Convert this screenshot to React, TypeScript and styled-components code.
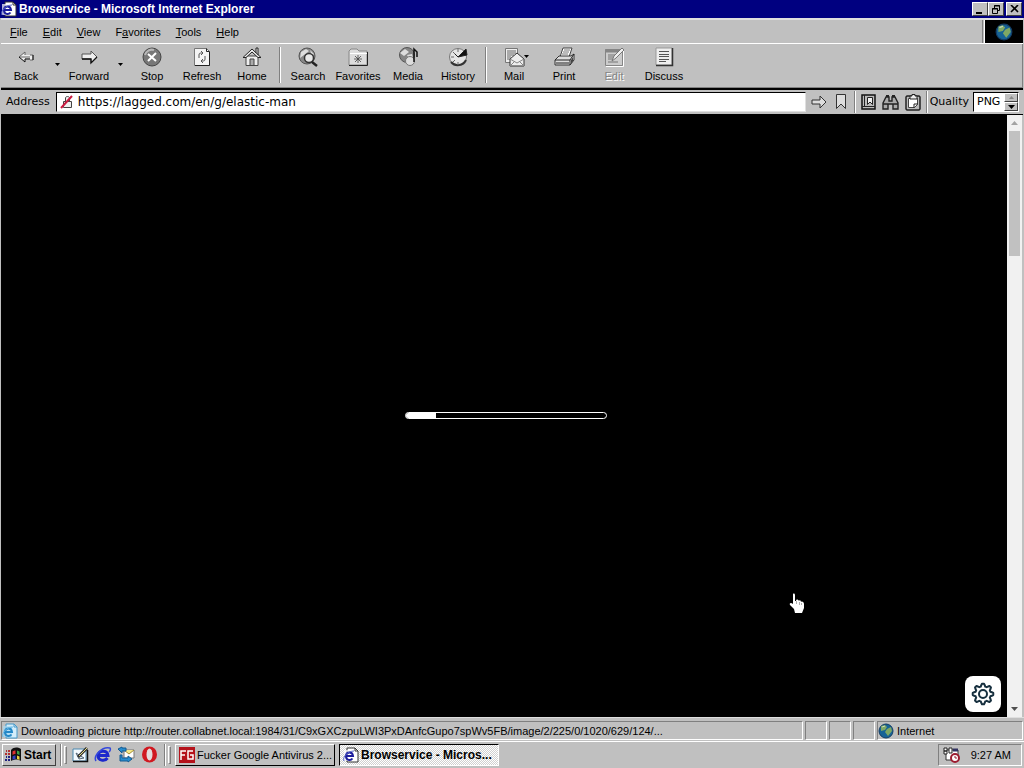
import React from "react";
import styled, { createGlobalStyle, css } from "styled-components";

const Global = createGlobalStyle`
  * { box-sizing: border-box; }
  body { margin: 0; background: #c0c0c0; }
  button, input, select { font: inherit; color: inherit; margin: 0; padding: 0; border: 0; background: none; border-radius: 0; }
  svg { display: block; flex: none; }
`;

const raised = css`
  border: 1px solid;
  border-color: #fff #404040 #404040 #fff;
`;
const sunken = css`
  border: 1px solid;
  border-color: #808080 #fff #fff #808080;
`;

const Desktop = styled.div`
  display: flex;
  flex-direction: column;
  min-height: 100vh;
  background: #c0c0c0;
  color: #000;
  font: 11px/14px "Liberation Sans", Arial, sans-serif;
`;
const TitleBar = styled.header`
  display: flex;
  align-items: center;
  height: 18px;
  padding: 0 2px 0 1px;
  gap: 2px;
  background: #000080;
  color: #fff;
`;
const Title = styled.h1`
  flex: 1;
  margin: 0;
  font-size: 12px;
  line-height: 16px;
  font-weight: bold;
`;
const WindowButtons = styled.div`
  display: flex;
`;
const WindowButton = styled.button<{ $gap?: boolean }>`
  ${raised}
  width: 16px;
  height: 14px;
  margin-left: ${(p) => (p.$gap ? 2 : 0)}px;
  background: #c0c0c0;
  display: grid;
  place-items: center;
`;
const MenuRow = styled.div`
  display: flex;
  align-items: stretch;
  height: 26px;
  margin: 0 1px;
  border-top: 2px solid #dfdfdf;
  border-bottom: 1px solid #fff;
`;
const Menu = styled.nav`
  display: flex;
  align-items: center;
  flex: 1;
  padding: 0 2px;
  border-right: 1px solid #808080;
`;
const MenuItem = styled.button`
  padding: 0 7px;
  margin-right: 1px;
`;
const Throbber = styled.div`
  width: 39px;
  margin-left: 1px;
  background: #000;
  border-left: 1px solid #fff;
  display: grid;
  place-items: center;
`;
const Toolbar = styled.div`
  display: flex;
  align-items: center;
  height: 44px;
  margin: 0 1px;
  padding-bottom: 2px;
  border-right: 1px solid #808080;
  border-bottom: 1px solid #808080;
`;
const ToolButton = styled.button<{ $off?: boolean }>`
  position: relative;
  display: flex;
  flex-direction: column;
  align-items: center;
  width: 50px;
  gap: 1px;
  color: ${(p) => (p.$off ? "#858585" : "#000")};
  text-shadow: ${(p) => (p.$off ? "1px 1px #fff" : "none")};
`;
const DropButton = styled.button`
  width: 13px;
  height: 40px;
  display: grid;
  place-items: center;
`;
const CornerArrow = styled.span`
  position: absolute;
  top: 8px;
  right: 10px;
`;
const Divider = styled.span<{ $tall?: boolean }>`
  flex: none;
  width: 2px;
  height: ${(p) => (p.$tall ? 36 : 22)}px;
  margin: 0 2px;
  border-left: 1px solid #808080;
  border-right: 1px solid #fff;
`;
const AddressRow = styled.form`
  display: flex;
  align-items: center;
  height: 27px;
  margin: 0 1px;
  padding: 0 4px 0 5px;
  border-top: 2px solid #000;
  border-bottom: 1px solid #000;
  font-family: "DejaVu Sans", Verdana, sans-serif;
`;
const AddressBox = styled.div`
  display: flex;
  align-items: center;
  flex: 1;
  height: 20px;
  margin: 0 2px 0 6px;
  padding-left: 3px;
  gap: 4px;
  background: #fff;
  border: 1px solid;
  border-color: #000 #dfdfdf #dfdfdf #000;
`;
const AddressInput = styled.input`
  flex: 1;
  outline: none;
  font-size: 12px;
`;
const SmallButton = styled.button`
  width: 22px;
  height: 20px;
  display: grid;
  place-items: center;
`;
const Quality = styled.div`
  display: flex;
  height: 20px;
  margin-left: 4px;
  background: #fff;
  border: 1px solid;
  border-color: #000 #fff #fff #000;
`;
const QualitySelect = styled.select`
  appearance: none;
  width: 30px;
  padding-left: 3px;
  outline: none;
`;
const Spinner = styled.div`
  display: flex;
  flex-direction: column;
`;
const SpinButton = styled.button`
  ${raised}
  flex: 1;
  width: 14px;
  background: #c0c0c0;
  display: grid;
  place-items: center;
`;
const Viewport = styled.main`
  position: relative;
  display: flex;
  flex: 1;
  margin: 0 2px 0 1px;
  background: #000;
`;
const Game = styled.div`
  flex: 1;
  display: grid;
  place-items: center;
  padding: 0 0 2px 4px;
`;
const Progress = styled.div`
  width: 202px;
  height: 7px;
  overflow: hidden;
  border: 1px solid #fff;
  border-radius: 4px;
`;
const ProgressFill = styled.div`
  height: 100%;
  background: #fff;
`;
const GearButton = styled.button`
  position: absolute;
  right: 21px;
  bottom: 5px;
  width: 36px;
  height: 36px;
  border-radius: 8px;
  background: #fff;
  display: grid;
  place-items: center;
`;
const Pointer = styled.span`
  position: absolute;
  left: 788px;
  top: 478px;
`;
const ScrollBar = styled.div`
  display: flex;
  flex-direction: column;
  align-items: center;
  width: 15px;
  background: #f1f1f1;
`;
const ScrollArrow = styled.button`
  width: 15px;
  height: 16px;
  display: grid;
  place-items: center;
`;
const ScrollTrack = styled.div`
  flex: 1;
  width: 11px;
`;
const ScrollThumb = styled.div`
  height: 22%;
  background: #c1c1c1;
`;
const StatusBar = styled.footer`
  display: flex;
  height: 24px;
  padding: 3px 1px 1px;
  gap: 2px;
  border-top: 1px solid #dfdfdf;
`;
const StatusCell = styled.div<{ $width?: number }>`
  ${sunken}
  display: flex;
  align-items: center;
  gap: 3px;
  white-space: nowrap;
  overflow: hidden;
  ${(p) => (p.$width ? `width: ${p.$width}px;` : "flex: 1;")}
`;
const TaskBar = styled.nav`
  display: flex;
  align-items: center;
  height: 27px;
  padding: 0 2px 1px;
  border-top: 1px solid #fff;
`;
const StartButton = styled.button`
  ${raised}
  display: flex;
  align-items: center;
  width: 54px;
  height: 22px;
  padding-left: 2px;
  gap: 2px;
  font-size: 12px;
  font-weight: bold;
`;
const Grip = styled.span`
  flex: none;
  width: 3px;
  height: 18px;
  border: 1px solid;
  border-color: #fff #808080 #808080 #fff;
`;
const Rule = styled(Divider)`
  margin: 0 2px 0 4px;
`;
const QuickLaunch = styled.div`
  display: flex;
  gap: 1px;
  margin-left: 2px;
`;
const TaskButton = styled.button<{ $active?: boolean }>`
  display: flex;
  align-items: center;
  width: 160px;
  height: 22px;
  margin-left: 4px;
  padding: 0 3px;
  gap: 2px;
  white-space: nowrap;
  overflow: hidden;
  border: 1px solid;
  border-color: ${(p) => (p.$active ? "#000 #fff #fff #000" : "#fff #000 #000 #fff")};
  background: ${(p) =>
    p.$active ? "repeating-conic-gradient(#fff 0 25%, #d0d0d0 0 50%) 0 0 / 2px 2px" : "#c0c0c0"};
  font-weight: ${(p) => (p.$active ? "bold" : "normal")};
  font-size: ${(p) => (p.$active ? 12 : 11)}px;
`;
const Tray = styled.div`
  ${sunken}
  display: flex;
  align-items: center;
  justify-content: space-between;
  width: 84px;
  height: 22px;
  margin-left: auto;
  padding: 0 10px 0 4px;
`;

const Triangle = ({ up, color = "#000", w = 5 }: { up?: boolean; color?: string; w?: number }) => (
  <svg width={w} height={w > 5 ? 4 : 3} viewBox="0 0 5 3" preserveAspectRatio="none">
    <path d={up ? "M0 3h5L2.5 0z" : "M0 0h5L2.5 3z"} fill={color} />
  </svg>
);

const PageIcon = ({ blue }: { blue?: boolean }) => {
  const line = blue ? "#4798c8" : "#333";
  const letter = blue ? "#2488c8" : "#1c1c9c";
  return (
    <svg width="16" height="16" viewBox="0 0 16 16">
      <path d="M4 1h8l3 3v11H4z" fill={blue ? "#d4edfa" : "#fff"} stroke={line} />
      <path d="M12 1v3h3" fill="none" stroke={line} />
      <path d="M1 3h9v11H1z" fill={blue ? "#a5d8f4" : "#fff"} opacity=".7" />
      <path d="M9.500 11.500c-2 2.500-6.500 2-6.500-2.500s6.500-5 7 0H4" fill="none" stroke={letter} strokeWidth="2" />
      <path d="M1 14C-1 10 5 4 11 4" fill="none" stroke={blue ? "#65b7e4" : "#5565c8"} />
    </svg>
  );
};

const Globe = ({ size = 16 }: { size?: number }) => (
  <svg width={size} height={size} viewBox="0 0 16 16">
    <circle cx="8" cy="8" r="7" fill="#176396" stroke="#123b63" />
    <path d="M3 3l4-1 2 2-2 3-4 1zM9 6l4-2 1 4-4 5-3-4z" fill="#7fa864" />
    <path d="M4 4l3-1" stroke="#fff" opacity=".6" />
  </svg>
);

const toolArt: Record<string, React.ReactNode> = {
  Back: (
    <>
      <path d="M3 10l6-5v3h8v5h-3v-2H9v4z" fill="#eee" />
      <path d="M9 5l-6 5h11M9 5v3M14 8h3v5h-3" fill="none" stroke="#666" />
      <path d="M3 10l6 5v-3h5M17 8v5" fill="none" stroke="#111" />
    </>
  ),
  Forward: (
    <>
      <path d="M3 7h9V4l6 6-6 6v-4H3z" fill="#eee" stroke="#555" />
      <path d="M3 12h9v4l6-6" fill="none" stroke="#111" strokeWidth="1.300" />
    </>
  ),
  Stop: (
    <>
      <circle cx="10" cy="10" r="9" fill="#777" stroke="#444" />
      <path d="M3 8a7 7 0 0 1 9-5" stroke="#b8b8b8" strokeWidth="2" fill="none" />
      <path d="M6 7l8 7M14 6l-8 8" stroke="#fff" strokeWidth="2" />
    </>
  ),
  Refresh: (
    <>
      <path d="M2.500 1.500h12l3 3v14h-15z" fill="#f4f4f4" stroke="#777" />
      <path d="M14.500 1.500v3h3M17.500 5v13.500H3" fill="none" stroke="#222" />
      <path d="M7 11V8c0-2 1-2 3-2M9 4l2 2-2 2M13 9v3c0 2-1 2-3 2M11 12l-2 2 2 2" fill="none" stroke="#555" />
    </>
  ),
  Home: (
    <>
      <path d="M4 9h12v9.500H4z" fill="#eee" stroke="#444" />
      <path d="M14 6V1h2v7M1 10.500L10 2l9 8.500h-3L10 5l-6 5.500z" fill="#eee" stroke="#222" />
      <path d="M8 18v-6h4v6" fill="#aaa" stroke="#444" />
    </>
  ),
  Search: (
    <>
      <circle cx="9" cy="9" r="8" fill="#888" stroke="#555" />
      <path d="M3 5l5-3 3 2-5 4-4 3zM12 3l4 4-2 2z" fill="#ddd" />
      <circle cx="11" cy="11" r="4.500" fill="#e8e8e8" stroke="#333" strokeWidth="1.500" />
      <path d="M14 15l5 4" stroke="#222" strokeWidth="2.500" />
    </>
  ),
  Favorites: (
    <>
      <path d="M1 18V4l2-2h6l2 2h8v14z" fill="#ddd" stroke="#888" />
      <path d="M1 18.500h18.500V5" fill="none" stroke="#222" />
      <path d="M2 6.500h17" stroke="#fff" />
      <path d="M10 8v8M6 12h8M7 9l6 6M13 9l-6 6" stroke="#444" strokeWidth=".8" />
    </>
  ),
  Media: (
    <>
      <circle cx="9" cy="8" r="7.500" fill="#858585" stroke="#555" />
      <path d="M2 6l5-4 4 3-5 4zM9 8l5-1 1 4-4 1z" fill="#ddd" />
      <circle cx="12" cy="14" r="4.500" fill="#ddd" stroke="#777" />
      <path d="M16 15V2l3 3v5" fill="none" stroke="#111" strokeWidth="1.500" />
    </>
  ),
  History: (
    <>
      <circle cx="10" cy="10" r="8.500" fill="#e4e4e4" stroke="#777" />
      <path d="M3 15a9 9 0 0 0 15-2" fill="none" stroke="#333" strokeWidth="2" />
      <path d="M10 2v3M3 10h3M10 15v3M5 5l2 2M5 15l2-2" stroke="#666" />
      <path d="M10 10l8-8 1 6zM10 10L7 7" fill="#111" stroke="#222" />
    </>
  ),
  Mail: (
    <>
      <path d="M1.500 1.500h12v14h-12z" fill="#eee" stroke="#777" />
      <path d="M3 4h9M3 6h9M3 8h7M3 10h4M3 12h3" stroke="#666" />
      <path d="M6 12l7-6 7 6v7H6z" fill="#eee" stroke="#333" />
      <path d="M6 12l7 4 7-4M6 19l5-5M20 19l-5-5" fill="none" stroke="#888" />
    </>
  ),
  Print: (
    <>
      <path d="M6 10L9 1h9l-3 9z" fill="#fff" stroke="#444" />
      <path d="M10 3h6M9 5h6M8 7h6" stroke="#777" />
      <path d="M1 13l4-4h12l3-2v6l-4 5H1z" fill="#ddd" stroke="#333" />
      <path d="M1 13h15l4-6M16 13v5M2 16h13" fill="none" stroke="#222" />
      <path d="M17 13l2-3v4l-2 3z" fill="#444" />
    </>
  ),
  Edit: (
    <>
      <path d="M1.500 2.500h17v16h-17z" fill="#ccc" stroke="#858585" />
      <path d="M1 4h17" stroke="#858585" strokeWidth="3" />
      <path d="M4 8h8M4 10h7M4 12h5M4 15h10" stroke="#777" />
      <path d="M8 14l2-5 8-8 2 2-8 8z" fill="#eee" stroke="#777" />
      <path d="M2 19.500h17.500V4" fill="none" stroke="#fff" />
    </>
  ),
  Discuss: (
    <>
      <path d="M2 1h16v17H2z" fill="#eee" stroke="#999" />
      <path d="M2 18.500h16.500V1" fill="none" stroke="#333" strokeWidth="1.500" />
      <path d="M5 4.500h10M5 7.500h10M5 9.500h10M5 12.500h10M5 14.500h7" stroke="#555" />
    </>
  ),
};

const Tool = ({ name, off, arrow }: { name: string; off?: boolean; arrow?: boolean }) => (
  <ToolButton type="button" $off={off} disabled={off}>
    <svg width="21" height="21" viewBox="0 0 21 21">
      {toolArt[name]}
    </svg>
    {name}
    {arrow && (
      <CornerArrow>
        <Triangle />
      </CornerArrow>
    )}
  </ToolButton>
);

// Outline of an eight-toothed gear, as polar points around (12, 12).
const gearPoints = Array.from({ length: 64 }, (_, i) => {
  const a = (i / 64) * Math.PI * 2;
  const tooth = Math.max(-1, Math.min(1, Math.cos(a * 8) * 1.8));
  const r = 9 + tooth * 1.3;
  return `${(12 + r * Math.sin(a)).toFixed(2)},${(12 - r * Math.cos(a)).toFixed(2)}`;
}).join(" ");

export default function App() {
  return (
    <>
      <Global />
      <Desktop>
        <TitleBar>
          <PageIcon />
          <Title>Browservice - Microsoft Internet Explorer</Title>
          <WindowButtons>
            <WindowButton aria-label="Minimize">
              <svg width="10" height="9"><path d="M1 7h6v2H1z" /></svg>
            </WindowButton>
            <WindowButton aria-label="Restore">
              <svg width="10" height="9" viewBox="0 0 10 9" fill="none" stroke="#000">
                <path d="M3.500 3V.5h5v5H6M3 1h6M1.500 3.500h5v5h-5zM1 4h6" />
              </svg>
            </WindowButton>
            <WindowButton $gap aria-label="Close">
              <svg width="9" height="8"><path d="M1 0l7 7M8 0L1 7" stroke="#000" strokeWidth="1.600" /></svg>
            </WindowButton>
          </WindowButtons>
        </TitleBar>

        <MenuRow>
          <Menu>
            <MenuItem><u>F</u>ile</MenuItem>
            <MenuItem><u>E</u>dit</MenuItem>
            <MenuItem><u>V</u>iew</MenuItem>
            <MenuItem>F<u>a</u>vorites</MenuItem>
            <MenuItem><u>T</u>ools</MenuItem>
            <MenuItem><u>H</u>elp</MenuItem>
          </Menu>
          <Throbber><Globe size={18} /></Throbber>
        </MenuRow>

        <Toolbar>
          <Tool name="Back" />
          <DropButton type="button" aria-label="Back history"><Triangle /></DropButton>
          <Tool name="Forward" />
          <DropButton type="button" aria-label="Forward history"><Triangle /></DropButton>
          <Tool name="Stop" />
          <Tool name="Refresh" />
          <Tool name="Home" />
          <Divider $tall />
          <Tool name="Search" />
          <Tool name="Favorites" />
          <Tool name="Media" />
          <Tool name="History" />
          <Divider $tall />
          <Tool name="Mail" arrow />
          <Tool name="Print" />
          <Tool name="Edit" off />
          <Tool name="Discuss" />
        </Toolbar>

        <AddressRow onSubmit={(e) => e.preventDefault()}>
          <label htmlFor="address">Address</label>
          <AddressBox>
            <svg width="14" height="14" viewBox="0 0 14 14">
              <path d="M3.500 6.500h8v6h-8zM5.500 6V3c0-2 4-2 4 0v3" fill="#eee" stroke="#444" />
              <path d="M1 13L12 1" stroke="#c8193f" strokeWidth="2" />
            </svg>
            <AddressInput id="address" defaultValue="https://lagged.com/en/g/elastic-man" spellCheck={false} />
          </AddressBox>
          <SmallButton type="button" aria-label="Go">
            <svg width="16" height="14"><path d="M1 5h8V1l6 6-6 6V9H1z" fill="#ddd" stroke="#333" /></svg>
          </SmallButton>
          <SmallButton type="button" aria-label="Bookmark">
            <svg width="12" height="16"><path d="M1.500.5h9v14L6 10l-4.500 4.500z" fill="#ddd" stroke="#333" /></svg>
          </SmallButton>
          <Divider />
          <SmallButton type="button" aria-label="Bookmarks">
            <svg width="15" height="16" viewBox="0 0 15 16">
              <path d="M1 1h13v14H1z" fill="#bbb" stroke="#111" strokeWidth="1.500" />
              <path d="M3.500 1v11M1 12.500h13" stroke="#222" />
              <path d="M6.500 3.500h5v7L9 8l-2.500 2.500z" fill="#eee" stroke="#222" />
            </svg>
          </SmallButton>
          <SmallButton type="button" aria-label="Find">
            <svg width="17" height="15" viewBox="0 0 17 15">
              <path d="M1 8l3-6h3v4h3V2h3l3 6v6h-5V9H6v5H1zM1 9h5M11 9h5" fill="#aaa" stroke="#222" strokeWidth="1.400" />
              <path d="M4 1h3M10 1h3" stroke="#222" strokeWidth="2" />
            </svg>
          </SmallButton>
          <SmallButton type="button" aria-label="Clipboard">
            <svg width="16" height="17" viewBox="0 0 16 17">
              <path d="M2 2h12l1 1v12l-1 1H2l-1-1V3z" fill="#bbb" stroke="#222" strokeWidth="1.500" />
              <path d="M3.500 4.500h9v6l-3 3h-6z" fill="#fff" stroke="#444" />
              <path d="M5 4V2h2V.5h3V2h2v3H5z" fill="#eee" stroke="#222" />
              <path d="M9 14v-4h4" fill="none" stroke="#222" />
            </svg>
          </SmallButton>
          <Divider />
          <label htmlFor="quality">Quality</label>
          <Quality>
            <QualitySelect id="quality" defaultValue="PNG">
              <option>PNG</option>
            </QualitySelect>
            <Spinner>
              <SpinButton type="button" aria-label="Previous quality"><Triangle up color="#888" /></SpinButton>
              <SpinButton type="button" aria-label="Next quality"><Triangle w={7} /></SpinButton>
            </Spinner>
          </Quality>
        </AddressRow>

        <Viewport>
          <Game>
            <Progress role="progressbar" aria-valuenow={15}>
              <ProgressFill style={{ width: "15%" }} />
            </Progress>
          </Game>
          <ScrollBar>
            <ScrollArrow aria-label="Scroll up"><Triangle up color="#a3a3a3" w={7} /></ScrollArrow>
            <ScrollTrack><ScrollThumb /></ScrollTrack>
            <ScrollArrow aria-label="Scroll down"><Triangle color="#505050" w={7} /></ScrollArrow>
          </ScrollBar>
          <GearButton aria-label="Settings">
            <svg width="24" height="24" viewBox="0 0 24 24" fill="none" stroke="#17303f" strokeWidth="2" strokeLinejoin="round">
              <polygon points={gearPoints} />
              <circle cx="12" cy="12" r="4" />
            </svg>
          </GearButton>
          <Pointer>
            <svg width="16" height="21" viewBox="0 0 16 21">
              <path d="M4 1c1-1 2 0 2 1v6h1c0-2 2-2 3 0 0-1 2-1 2 1 1-1 3 0 3 2v4l-2 5H6l-1-4-4-4c-1-2 1-3 3-1z" fill="#fff" />
              <path d="M7.500 8v3M10.500 9v3M12.500 10v2" stroke="#777" strokeWidth=".6" />
            </svg>
          </Pointer>
        </Viewport>

        <StatusBar>
          <StatusCell>
            <PageIcon blue />
            Downloading picture http://router.collabnet.local:1984/31/C9xGXCzpuLWI3PxDAnfcGupo7spWv5FB/image/2/225/0/1020/629/124/...
          </StatusCell>
          <StatusCell $width={22} />
          <StatusCell $width={22} />
          <StatusCell $width={22} />
          <StatusCell $width={146}>
            <Globe size={16} />
            Internet
          </StatusCell>
        </StatusBar>

        <TaskBar>
          <StartButton>
            <svg width="17" height="16" viewBox="0 0 17 16">
              <path d="M6 3c3-3 6-3 10-1v12c-4-2-6-2-10 0z" fill="#111" />
              <path d="M7.500 4.500c1-1 2-1 3-1v3.500c-1 0-2 0-3 1z" fill="#e03030" />
              <path d="M12 3.500l2.500 1V8L12 7z" fill="#38a048" />
              <path d="M7.500 9.500c1-1 2-1 3-1V12c-1 0-2 0-3 1z" fill="#3040c0" />
              <path d="M12 8.500l2.500 1V13L12 12z" fill="#e8d040" />
              <path d="M1 4h1M3 4h2M0 7h2M3 7h2" stroke="#b03030" strokeWidth="2" />
              <path d="M1 10h1M3 10h2M0 13h2M3 13h2" stroke="#202080" strokeWidth="2" />
            </svg>
            Start
          </StartButton>
          <Rule />
          <Grip />
          <QuickLaunch>
            <SmallButton aria-label="Show desktop">
              <svg width="17" height="17" viewBox="0 0 17 17">
                <path d="M1 3h13v12H1z" fill="#f4faff" stroke="#4a88b0" />
                <path d="M1 15.500h14.500V4" fill="none" stroke="#111" strokeWidth="1.500" />
                <path d="M4 7l8 5-5 1z" fill="#d8e4ec" stroke="#567" />
                <path d="M6 11l9-9" stroke="#333" strokeWidth="3" />
                <path d="M7 10l8-8" stroke="#e6dc86" />
              </svg>
            </SmallButton>
            <SmallButton aria-label="Internet Explorer">
              <svg width="18" height="17" viewBox="0 0 18 17" fill="none">
                <path d="M13.500 12c-3 4-9.500 2.500-9.500-2.500s9.500-6.500 10 0H5" stroke="#1c28cc" strokeWidth="3" />
                <path d="M2 15C-1 10 8 0 16 2c1 1 0 3-1 4" stroke="#3448dc" strokeWidth="1.500" />
              </svg>
            </SmallButton>
            <SmallButton aria-label="Outlook Express">
              <svg width="17" height="17" viewBox="0 0 17 17">
                <path d="M6 4h10v8H6z" fill="#fff" stroke="#777" />
                <path d="M6 4l5 4 5-4" fill="#f4e98a" stroke="#a48c32" />
                <path d="M0 3l4-2v1h4v3H4v2z" fill="#278dcf" stroke="#145a91" />
                <path d="M14 13l-4-3v2H4V9H2v6h8v1z" fill="#278dcf" stroke="#145a91" />
              </svg>
            </SmallButton>
            <SmallButton aria-label="Opera">
              <svg width="17" height="17">
                <ellipse cx="8.500" cy="8.500" rx="7.500" ry="8" fill="#d01820" />
                <ellipse cx="8.500" cy="8.500" rx="3" ry="6" fill="#e4dcdc" />
              </svg>
            </SmallButton>
          </QuickLaunch>
          <Rule />
          <Grip />
          <TaskButton>
            <svg width="16" height="16" viewBox="0 0 16 16">
              <path d="M0 0h16v16H0z" fill="#b5121b" />
              <path d="M7 4H2v9M2 8h4M14 4H9v8h5V8h-3" fill="none" stroke="#fff" strokeWidth="1.500" />
            </svg>
            Fucker Google Antivirus 2...
          </TaskButton>
          <TaskButton $active>
            <PageIcon />
            Browservice - Micros...
          </TaskButton>
          <Tray>
            <svg width="17" height="17" viewBox="0 0 17 17">
              <path d="M3 4h12v10H3z" fill="#fff" stroke="#333" />
              <path d="M1 2h3v3H1zM1 5h3v3H1zM6 2h3v5H6z" fill="#fff" stroke="#222" />
              <path d="M10 4h5" stroke="#303060" strokeWidth="3" />
              <circle cx="12" cy="12" r="4" fill="#fff" stroke="#9c1c30" strokeWidth="2" />
              <path d="M12 10v2h2" fill="none" stroke="#9c1c30" />
            </svg>
            <time>9:27 AM</time>
          </Tray>
        </TaskBar>
      </Desktop>
    </>
  );
}
